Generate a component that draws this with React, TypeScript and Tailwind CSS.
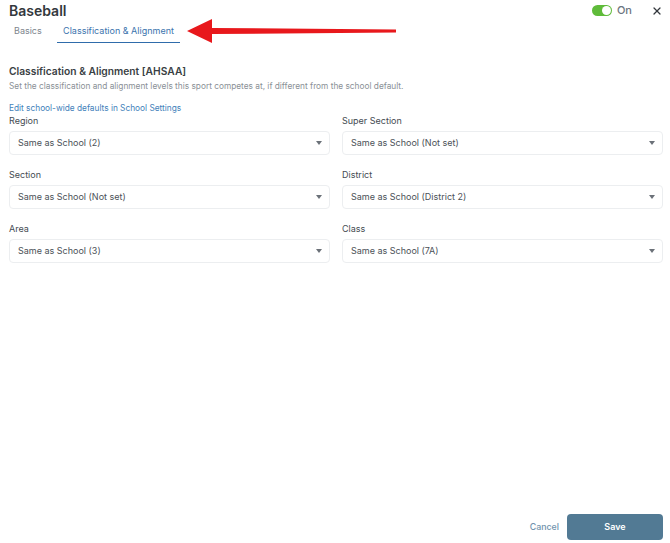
import React from "react";
import { X } from "lucide-react";

const fields = [
  { label: "Region", value: "Same as School (2)" },
  { label: "Super Section", value: "Same as School (Not set)" },
  { label: "Section", value: "Same as School (Not set)" },
  { label: "District", value: "Same as School (District 2)" },
  { label: "Area", value: "Same as School (3)" },
  { label: "Class", value: "Same as School (7A)" },
];

function SelectField({ label, value }: { label: string; value: string }) {
  return (
    <div>
      <div className="h-[18px] pt-[1px] text-[9px] leading-[14px] text-[#444b52]">{label}</div>
      <div className="h-[24px] flex items-center justify-between pl-[8px] pr-[7px] border border-[#eceef0] rounded-[4px] bg-white text-[9px] text-[#4b5157]">
        <span className="-mt-[1px]">{value}</span>
        <span className="w-0 h-0 border-l-[3.5px] border-r-[3.5px] border-t-[4px] border-l-transparent border-r-transparent border-t-[#6b7178]" />
      </div>
    </div>
  );
}

export default function App() {
  return (
    <div className="w-[670px] h-[543px] bg-white flex flex-col px-[9px] font-['Inter',sans-serif] overflow-hidden">
      <div className="h-[19px] mt-[1px] flex items-center justify-between">
        <h1 className="text-[14px] font-semibold leading-[19px] text-[#33383d]">Baseball</h1>
        <div className="flex items-center -mr-[2px]">
          <div className="relative w-[20px] h-[11px] rounded-full bg-[#5fbb3a]">
            <div className="absolute right-[1px] top-[1px] w-[9px] h-[9px] rounded-full bg-white" />
          </div>
          <span className="ml-[5px] text-[11px] font-medium text-[#6b7580]">On</span>
          <X size={12} strokeWidth={2.5} className="ml-[19px] text-[#33383d]" />
        </div>
      </div>

      <div className="relative mt-[1px] h-[22px] flex text-[9px] leading-[20px] whitespace-nowrap">
        <div className="w-[48px] pl-[5px] text-[#7d858d]">Basics</div>
        <div className="w-[123px] text-center text-[#3b74ad] border-b border-[#2f6cab]">
          Classification &amp; Alignment
        </div>
        {/* red annotation arrow */}
        <svg className="absolute left-[178px] top-[-2px]" width="220" height="30" viewBox="0 0 220 30">
          <path d="M0 12 L25 0 L25 9 L209 10.5 L209 13.5 L25 15 L25 24 Z" fill="#e8181c" />
        </svg>
      </div>

      <h2 className="mt-[21px] text-[10.25px] font-semibold leading-[14px] text-[#3a3f44]">
        Classification &amp; Alignment [AHSAA]
      </h2>
      <p className="mt-[2px] text-[8.3px] leading-[13px] text-[#8a9096]">
        Set the classification and alignment levels this sport competes at, if different from the school default.
      </p>
      <a className="mt-[9px] text-[8.3px] leading-[13px] text-[#3f7fba]">Edit school-wide defaults in School Settings</a>

      <div className="-mt-[2px] grid grid-cols-[321px_321px] gap-x-[12px] gap-y-[12px]">
        {fields.map((f) => (
          <SelectField key={f.label} label={f.label} value={f.value} />
        ))}
      </div>

      <div className="mt-auto mb-[3px] -mr-[2px] flex items-center justify-end">
        <span className="mr-[8px] text-[8.8px] font-medium text-[#6f93ad]">Cancel</span>
        <button className="w-[96px] h-[26px] rounded-[4px] bg-[#527a94] text-white text-[9px] font-semibold">Save</button>
      </div>
    </div>
  );
}
